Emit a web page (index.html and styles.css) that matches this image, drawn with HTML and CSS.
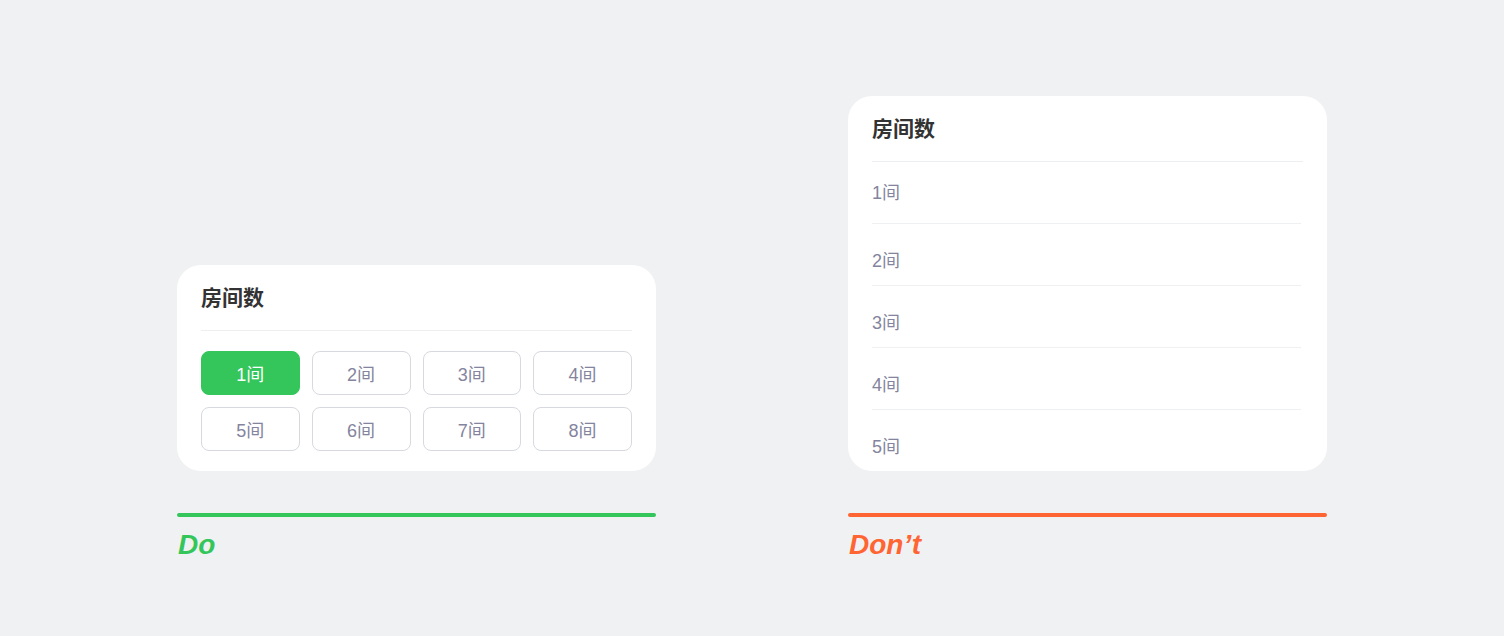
FILE: index.html
```html
<!DOCTYPE html>
<html lang="zh-CN">
<head>
<meta charset="utf-8">
<title>房间数 Do / Don't</title>
<link rel="stylesheet" href="styles.css">
</head>
<body>
<main class="compare">
  <section class="column">
    <div class="card">
      <div class="card-title">房间数</div>
      <div class="options">
        <div class="option option--active">1间</div>
        <div class="option">2间</div>
        <div class="option">3间</div>
        <div class="option">4间</div>
        <div class="option">5间</div>
        <div class="option">6间</div>
        <div class="option">7间</div>
        <div class="option">8间</div>
      </div>
    </div>
    <div class="rule rule--do"></div>
    <div class="verdict verdict--do">Do</div>
  </section>
  <section class="column">
    <div class="card">
      <div class="card-title">房间数</div>
      <ul class="list">
        <li class="list-item">1间</li>
        <li class="list-item">2间</li>
        <li class="list-item">3间</li>
        <li class="list-item">4间</li>
        <li class="list-item">5间</li>
      </ul>
    </div>
    <div class="rule rule--dont"></div>
    <div class="verdict verdict--dont">Don’t</div>
  </section>
</main>
</body>
</html>
```
FILE: styles.css
```css
html, body {
  margin: 0;
  padding: 0;
}
body {
  background: #f0f1f3;
  font-family: "Liberation Sans", "Noto Sans CJK SC", sans-serif;
  width: 1504px;
  height: 636px;
  overflow: hidden;
}
.compare {
  display: flex;
  justify-content: center;
  align-items: flex-end;
  gap: 192px;
  padding-top: 96px;
}
.column {
  width: 479px;
  display: flex;
  flex-direction: column;
}
.card {
  background: #ffffff;
  border-radius: 24px;
  padding: 0 24px 20px;
}
.card-title {
  font-size: 21px;
  line-height: 22px;
  font-weight: 700;
  color: #333333;
  padding: 22px 0 21px;
  border-bottom: 1px solid #eceef1;
}
.options {
  display: grid;
  grid-template-columns: repeat(4, 1fr);
  gap: 12px;
  margin-top: 20px;
}
.option {
  height: 44px;
  box-sizing: border-box;
  border: 1px solid #d6d9df;
  border-radius: 8px;
  display: flex;
  align-items: center;
  justify-content: center;
  font-size: 18px;
  color: #84849e;
}
.option--active {
  background: #34c65b;
  border-color: #34c65b;
  color: #ffffff;
}
.list {
  list-style: none;
  margin: 0;
  padding: 0;
}
.list-item {
  height: 62px;
  box-sizing: border-box;
  padding-top: 26px;
  font-size: 18px;
  line-height: 22px;
  color: #84849e;
  border-bottom: 1px solid #eff0f2;
  margin-right: 2px;
}
.list-item:first-child {
  padding-top: 20px;
}
.list-item:last-child {
  height: 61px;
  border-bottom: none;
  margin-bottom: -20px;
}
.rule {
  height: 4px;
  border-radius: 2px;
  margin-top: 42px;
}
.rule--do {
  background: #34c65b;
}
.rule--dont {
  background: #ff6433;
}
.verdict {
  margin-top: 12px;
  font-size: 28px;
  line-height: 32px;
  font-weight: 700;
  font-style: italic;
  padding-left: 1px;
}
.verdict--do {
  color: #34c65b;
}
.verdict--dont {
  color: #ff6433;
}
```
